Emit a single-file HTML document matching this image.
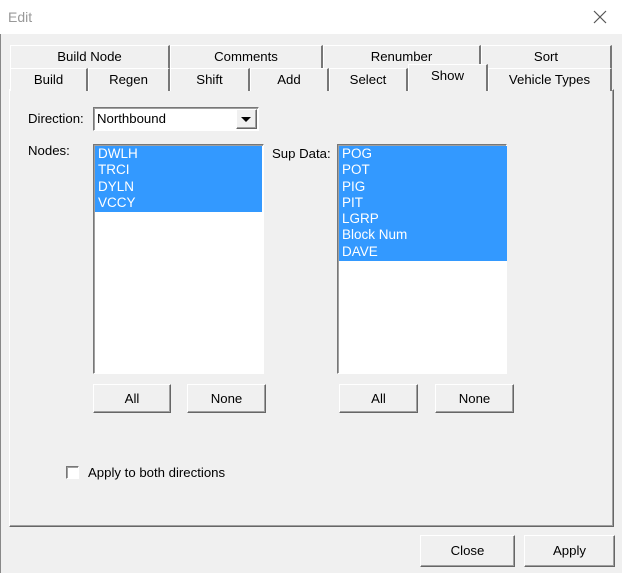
<!DOCTYPE html>
<html><head><meta charset="utf-8"><style>
*{box-sizing:border-box;margin:0;padding:0}
body{width:622px;height:573px;background:#f0f0f0;font-family:"Liberation Sans",sans-serif;font-size:13.2px;color:#000;position:relative;overflow:hidden}
.a{position:absolute}
.title{left:0;top:0;width:622px;height:34px;background:#fff;}
.tab{position:absolute;height:23px;border-top:1px solid #fff;border-left:1px solid #fff;border-right:2px solid #777;text-align:center;line-height:22px;background:#f0f0f0}
.btn{position:absolute;background:#f0f0f0;border:1px solid;border-color:#fff #666 #666 #fff;box-shadow:inset -1px -1px 0 #a0a0a0;text-align:center}
.list{position:absolute;background:#fff;border:1px solid;border-color:#777 #fff #fff #777;box-shadow:inset 1px 1px 0 #a0a0a0}
.sel{position:absolute;left:1px;top:1px;background:#3399ff;color:#fff;padding-left:3px;line-height:16.3px;font-size:13.5px}
</style></head><body>
<div class="a" style="left:0;top:0;width:1px;height:573px;background:#888"></div>
<div class="a title"></div>
<div class="a" style="left:8px;top:9px;font-size:14px;color:#999">Edit</div>
<svg class="a" style="left:593px;top:10px" width="14" height="14"><path d="M1 1L13 13M13 1L1 13" stroke="#555" stroke-width="1.2"/></svg>
<div class="a" style="left:9px;top:89px;width:605px;height:438px;border:1px solid;border-color:#fff #666 #666 #fff;box-shadow:inset -1px -1px 0 #a0a0a0"></div>
<div class="tab" style="left:10px;top:45px;width:160px">Build Node</div>
<div class="tab" style="left:170px;top:45px;width:153px">Comments</div>
<div class="tab" style="left:323px;top:45px;width:158px">Renumber</div>
<div class="tab" style="left:481px;top:45px;width:131px">Sort</div>
<div class="tab" style="left:10px;top:68px;width:78px">Build</div>
<div class="tab" style="left:88px;top:68px;width:82px">Regen</div>
<div class="tab" style="left:170px;top:68px;width:80px">Shift</div>
<div class="tab" style="left:250px;top:68px;width:79px">Add</div>
<div class="tab" style="left:329px;top:68px;width:79px">Select</div>
<div class="tab" style="left:408px;top:64px;width:80px;height:27px;line-height:22px;border-bottom:none">Show</div>
<div class="tab" style="left:488px;top:68px;width:124px">Vehicle Types</div>
<div class="a" style="left:28px;top:111px">Direction:</div>
<div class="list" style="left:93px;top:107px;width:166px;height:24px"></div>
<div class="a" style="left:97px;top:111px">Northbound</div>
<div class="btn" style="left:236px;top:109px;width:21px;height:20px"></div>
<svg class="a" style="left:241px;top:117px" width="10" height="6"><path d="M0 0H10L5 5Z" fill="#000"/></svg>
<div class="a" style="left:28px;top:143px">Nodes:</div>
<div class="list" style="left:93px;top:144px;width:171px;height:230px"><div class="sel" style="width:167px;height:66px">DWLH<br>TRCI<br>DYLN<br>VCCY</div></div>
<div class="a" style="left:272px;top:146px">Sup Data:</div>
<div class="list" style="left:337px;top:144px;width:170px;height:230px"><div class="sel" style="width:168px;height:115px">POG<br>POT<br>PIG<br>PIT<br>LGRP<br>Block Num<br>DAVE</div></div>
<div class="btn" style="left:93px;top:384px;width:78px;height:29px;line-height:27px">All</div>
<div class="btn" style="left:187px;top:384px;width:79px;height:29px;line-height:27px">None</div>
<div class="btn" style="left:339px;top:384px;width:79px;height:29px;line-height:27px">All</div>
<div class="btn" style="left:435px;top:384px;width:79px;height:29px;line-height:27px">None</div>
<div class="list" style="left:66px;top:466px;width:13px;height:13px"></div>
<div class="a" style="left:88px;top:465px">Apply to both directions</div>
<div class="btn" style="left:420px;top:535px;width:95px;height:32px;line-height:30px">Close</div>
<div class="btn" style="left:524px;top:535px;width:91px;height:32px;line-height:30px">Apply</div>
</body></html>
